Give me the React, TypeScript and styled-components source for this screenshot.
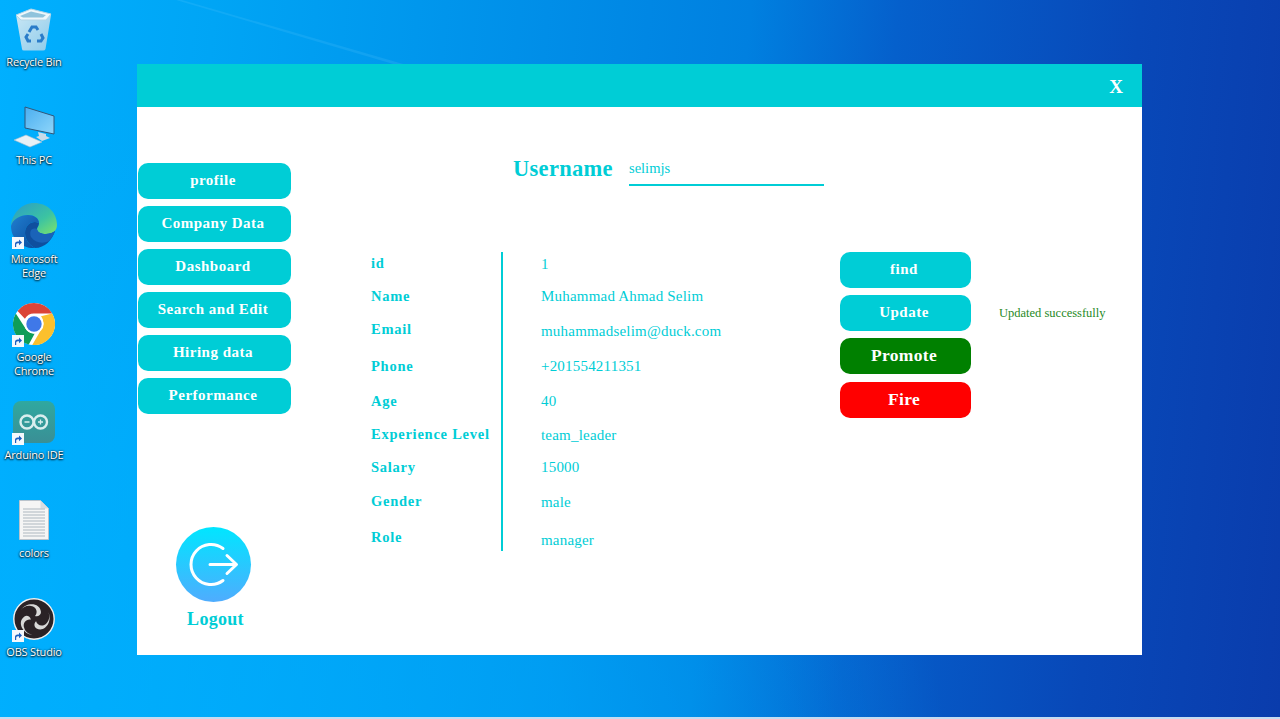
import styled, { createGlobalStyle } from "styled-components";

const GlobalStyle = createGlobalStyle`
  html, body {
    margin: 0;
    padding: 0;
    height: 100%;
    overflow: hidden;
  }
  * {
    box-sizing: border-box;
  }
`;

const CYAN = "#00cdd6";
const SERIF = `"Liberation Serif", "Times New Roman", serif`;

const Desktop = styled.div`
  position: relative;
  width: 1280px;
  height: 719px;
  overflow: hidden;
  background-image: radial-gradient(
      750px 700px at 200px 800px,
      rgba(0, 176, 255, 0.7) 0%,
      rgba(0, 176, 255, 0.5) 50%,
      rgba(0, 176, 255, 0) 100%
    ),
    linear-gradient(
      95deg,
      #00b0ff 0%,
      #00a5f5 16%,
      #0080e0 56%,
      #0560cc 67%,
      #0848b8 85%,
      #0a3cac 100%
    );
  border-bottom: 2px solid #c4dcf2;
  &::before {
    content: "";
    position: absolute;
    inset: 0;
    background: rgba(120, 210, 255, 0.14);
    clip-path: polygon(176px 0, 182px 0, 410px 66px, 400px 66px);
  }
`;

const IconColumn = styled.div`
  width: 68px;
  padding-top: 4px;
  display: flex;
  flex-direction: column;
`;

const Tile = styled.div`
  height: 98.3px;
  display: flex;
  flex-direction: column;
  align-items: center;
`;

const TileIcon = styled.div`
  position: relative;
  width: 50px;
  height: 50px;
  display: flex;
  align-items: center;
  justify-content: center;
`;

const Shortcut = styled.div`
  position: absolute;
  left: 3px;
  bottom: 2px;
  width: 12px;
  height: 12px;
  background: #f4f8fc;
  display: flex;
  align-items: center;
  justify-content: center;
`;

const TileLabel = styled.div`
  margin-top: 1px;
  font-family: "Open Sans", "Noto Sans", sans-serif;
  font-size: 11px;
  line-height: 14px;
  letter-spacing: -0.2px;
  color: #fff;
  text-align: center;
  white-space: pre-line;
  text-shadow: 0 1px 2px #000, 0 0 2px rgba(0, 0, 0, 0.8);
`;

const Window = styled.div`
  position: absolute;
  left: 137px;
  top: 64px;
  width: 1005px;
  height: 591px;
  background: #fff;
  display: flex;
  flex-direction: column;
`;

const TitleBar = styled.div`
  height: 43px;
  flex-shrink: 0;
  background: ${CYAN};
  display: flex;
  align-items: center;
  justify-content: flex-end;
  padding-right: 19px;
`;

const CloseMark = styled.span`
  font-family: ${SERIF};
  font-weight: 700;
  font-size: 19px;
  line-height: 1;
  color: #fff;
  margin-top: 1px;
`;

const Body = styled.div`
  flex: 1;
  display: flex;
`;

const Sidebar = styled.nav`
  width: 234px;
  flex-shrink: 0;
  padding: 56px 0 0 1px;
  display: flex;
  flex-direction: column;
`;

const NavList = styled.div`
  display: flex;
  flex-direction: column;
  gap: 7px;
`;

const PillButton = styled.button<{ $bg?: string; $big?: boolean }>`
  height: 36px;
  border: none;
  border-radius: 10px;
  padding: 0 3px 1px 0;
  background: ${(props) => props.$bg || CYAN};
  color: #fff;
  font-family: ${SERIF};
  font-weight: 700;
  font-size: ${(props) => (props.$big ? "17.5px" : "15px")};
  letter-spacing: ${(props) => (props.$big ? "0.3px" : "0.5px")};
`;

const NavButton = styled(PillButton)`
  width: 153px;
`;

const LogoutBox = styled.div`
  width: 151px;
  margin-top: 113px;
  display: flex;
  flex-direction: column;
  align-items: center;
`;

const LogoutCircle = styled.div`
  width: 75px;
  height: 75px;
  border-radius: 50%;
  background: linear-gradient(to bottom, #00e6ff, #4facfe);
  display: flex;
`;

const LogoutText = styled.div`
  margin-top: 5px;
  margin-left: 4px;
  font-family: ${SERIF};
  font-weight: 700;
  font-size: 18px;
  line-height: 24px;
  letter-spacing: 0.3px;
  color: ${CYAN};
`;

const Main = styled.main`
  flex: 1;
  padding-top: 46px;
`;

const UsernameRow = styled.div`
  margin-left: 142px;
  height: 33px;
  display: flex;
  align-items: flex-start;
`;

const UsernameLabel = styled.label`
  width: 116px;
  font-family: ${SERIF};
  font-weight: 700;
  font-size: 22.5px;
  line-height: 32px;
  letter-spacing: 0.3px;
  color: ${CYAN};
`;

const UsernameInput = styled.div`
  width: 195px;
  height: 33px;
  border-bottom: 2px solid ${CYAN};
  font-family: ${SERIF};
  font-size: 14.5px;
  line-height: 30px;
  color: ${CYAN};
`;

const Details = styled.div`
  margin-top: 66px;
  display: flex;
  align-items: flex-start;
`;

const LabelColumn = styled.div`
  width: 130px;
  display: flex;
  flex-direction: column;
`;

const FieldLabel = styled.div<{ $gap: number }>`
  margin-top: ${(props) => props.$gap}px;
  height: 20px;
  font-family: ${SERIF};
  font-weight: 700;
  font-size: 14.5px;
  line-height: 20px;
  letter-spacing: 0.75px;
  white-space: nowrap;
  color: ${CYAN};
`;

const ValueColumn = styled.div`
  width: 339px;
  height: 299px;
  padding-left: 38px;
  border-left: 2px solid ${CYAN};
  display: flex;
  flex-direction: column;
`;

const FieldValue = styled.div<{ $gap: number }>`
  margin-top: ${(props) => props.$gap}px;
  height: 20px;
  font-family: ${SERIF};
  font-size: 15px;
  line-height: 20px;
  letter-spacing: 0.2px;
  white-space: nowrap;
  color: ${CYAN};
`;

const Actions = styled.div`
  width: 131px;
  display: flex;
  flex-direction: column;
  gap: 7px;
  button:last-child {
    margin-top: 1px;
  }
`;

const StatusText = styled.div`
  margin: 53px 0 0 28px;
  font-family: ${SERIF};
  font-size: 12.5px;
  line-height: 16px;
  white-space: nowrap;
  color: #1f8a1f;
`;

const labels = [
  { text: "id", gap: 1 },
  { text: "Name", gap: 13 },
  { text: "Email", gap: 13 },
  { text: "Phone", gap: 17 },
  { text: "Age", gap: 15 },
  { text: "Experience Level", gap: 13 },
  { text: "Salary", gap: 13 },
  { text: "Gender", gap: 14 },
  { text: "Role", gap: 16 },
];

const values = [
  { text: "1", gap: 2 },
  { text: "Muhammad Ahmad Selim", gap: 12 },
  { text: "muhammadselim@duck.com", gap: 15 },
  { text: "+201554211351", gap: 15 },
  { text: "40", gap: 15 },
  { text: "team_leader", gap: 14 },
  { text: "15000", gap: 12 },
  { text: "male", gap: 15 },
  { text: "manager", gap: 18 },
];

const navItems = [
  "profile",
  "Company Data",
  "Dashboard",
  "Search and Edit",
  "Hiring data",
  "Performance",
];

function ShortcutBadge() {
  return (
    <Shortcut>
      <svg width="10" height="10" viewBox="0 0 10 10">
        <path d="M2 9V6c0-1.6 1-2.5 2.6-2.5H6V1.5L9 4.4 6 7.2V5.2H4.8C3.6 5.2 3.2 6 3.2 7v2z" fill="#1c5fc0" />
      </svg>
    </Shortcut>
  );
}

function RecycleBinIcon() {
  return (
    <svg width="42" height="44" viewBox="0 0 42 44">
      <defs>
        <linearGradient id="binBody" x1="0" y1="0" x2="1" y2="1">
          <stop offset="0" stopColor="#c8e6f5" />
          <stop offset="1" stopColor="#8ecbea" />
        </linearGradient>
      </defs>
      <path d="M3 8 L9 42 Q9 43.5 11 43.5 H30 Q32 43.5 32.5 42 L38 8z" fill="url(#binBody)" />
      <path d="M3 8 L18 2 L38 7 L33 13 L8 13z" fill="#eef7fb" stroke="#b4d5e6" strokeWidth="1" />
      <path d="M7 9 L18 4.5 L33 8 L30 10.5 L10 10.5z" fill="#8fc3dc" />
      <g fill="none" stroke="#2a7cc9" strokeWidth="3">
        <path d="M16 25l3-5h4l2 3" />
        <path d="M28 27l2 4-2 3h-4" />
        <path d="M18 34h-3l-2-4 2-3" />
      </g>
    </svg>
  );
}

function ThisPcIcon() {
  return (
    <svg width="44" height="42" viewBox="0 0 44 42">
      <defs>
        <linearGradient id="pcScreen" x1="0" y1="0" x2="1" y2="1">
          <stop offset="0" stopColor="#4aaef0" />
          <stop offset="1" stopColor="#8fd6fa" />
        </linearGradient>
      </defs>
      <path d="M13 1 L42 10 V28 L13 22z" fill="url(#pcScreen)" stroke="#31577a" strokeWidth="1" />
      <path d="M26 26 L34 28 V30 L38 32 L30 35 L24 31 L27 30z" fill="#c8dbe8" />
      <path d="M2 34 L14 29 L30 36 L18 41z" fill="#e8f0f6" stroke="#a3bccd" strokeWidth="0.6" />
    </svg>
  );
}

function EdgeIcon() {
  return (
    <svg width="46" height="46" viewBox="0 0 46 46">
      <defs>
        <linearGradient id="edgeTop" x1="0" y1="0" x2="1" y2="1">
          <stop offset="0" stopColor="#2a9bc8" />
          <stop offset="0.6" stopColor="#3cc3a2" />
          <stop offset="1" stopColor="#7de36a" />
        </linearGradient>
        <linearGradient id="edgeLow" x1="0" y1="0" x2="1" y2="1">
          <stop offset="0" stopColor="#1f7fd0" />
          <stop offset="1" stopColor="#0c4a9c" />
        </linearGradient>
      </defs>
      <path d="M23 0C36 0 46 9 46 22c0 6-5 9-11 9-5 0-9-2-9-5 0-2 2-3 2-6 0-5-5-8-11-8C9 12 2 17 0 23 1 10 11 0 23 0z" fill="url(#edgeTop)" />
      <path d="M0 23c2-7 9-11 17-11 6 0 11 3 11 8-7-3-14 2-14 10 0 6 4 12 10 15C11 46 0 36 0 23z" fill="url(#edgeLow)" />
      <path d="M28 20c0 3-2 4-2 6 0 3 4 5 9 5 3 0 7-1 9-3-3 9-10 17-20 17-6-3-10-9-10-15 0-8 7-13 14-10z" fill="#0f4f9e" />
      <path d="M26 26c0 3 4 5 9 5 3 0 7-1 9-3-1 3-3 7-6 10-6 3-14 2-18-4-2-5 0-10 6-8z" fill="#1a63b8" />
    </svg>
  );
}

function ChromeIcon() {
  return (
    <svg width="42" height="42" viewBox="0 0 48 48">
      <circle cx="24" cy="24" r="24" fill="#fff" />
      <path d="M24 0a24 24 0 0 1 20.8 12H24a12 12 0 0 0-10.4 6L5.2 9A24 24 0 0 1 24 0z" fill="#db4437" />
      <path d="M3.2 12A24 24 0 0 0 18 47.3l7-12.6a12 12 0 0 1-11.4-6.7z" fill="#0f9d58" />
      <path d="M44.8 12A24 24 0 0 1 22 48l10.4-18A12 12 0 0 0 32 15z" fill="#fbc02d" />
      <circle cx="24" cy="24" r="11" fill="#fff" />
      <circle cx="24" cy="24" r="8.8" fill="#3f78e8" />
    </svg>
  );
}

function ArduinoIcon() {
  return (
    <svg width="42" height="42" viewBox="0 0 42 42">
      <defs>
        <linearGradient id="arduinoBg" x1="0" y1="0" x2="0" y2="1">
          <stop offset="0" stopColor="#2fa8a0" />
          <stop offset="1" stopColor="#3a8f95" />
        </linearGradient>
      </defs>
      <rect width="42" height="42" rx="8" fill="url(#arduinoBg)" />
      <g fill="none" stroke="#d8eeee" strokeWidth="2.4">
        <circle cx="14" cy="21" r="6.5" />
        <circle cx="27.5" cy="21" r="6.5" />
      </g>
      <path d="M11.5 21h5M25 21h5M27.5 18.5v5" stroke="#d8eeee" strokeWidth="1.3" />
    </svg>
  );
}

function FileIcon() {
  return (
    <svg width="30" height="40" viewBox="0 0 30 40">
      <path d="M.5.5h21l8 8v31H.5z" fill="#f5f5f5" stroke="#b9c3cc" />
      <path d="M21.5.5v8h8z" fill="#d7dde2" />
      <g stroke="#adb7bf" strokeWidth="1">
        {[9, 12, 15, 18, 21, 24, 27, 30, 33, 36].map((y) => (
          <line key={y} x1="4" x2="26" y1={y} y2={y} />
        ))}
      </g>
    </svg>
  );
}

function ObsIcon() {
  const blade = "M8 12C13 4 27 4 28 14c0 3-3 5-6 4 3-3 2-9-4-10-4-1-8 1-10 4z";
  return (
    <svg width="42" height="42" viewBox="0 0 42 42">
      <circle cx="21" cy="21" r="20.2" fill="#2a2226" stroke="#f0f0f0" strokeWidth="1.4" />
      <g fill="#d8d8d8">
        <path d={blade} />
        <path d={blade} transform="rotate(120 21 21)" />
        <path d={blade} transform="rotate(240 21 21)" />
      </g>
    </svg>
  );
}

const desktopIcons = [
  { label: "Recycle Bin", icon: <RecycleBinIcon />, link: false },
  { label: "This PC", icon: <ThisPcIcon />, link: false },
  { label: "Microsoft\nEdge", icon: <EdgeIcon />, link: true },
  { label: "Google\nChrome", icon: <ChromeIcon />, link: true },
  { label: "Arduino IDE", icon: <ArduinoIcon />, link: true },
  { label: "colors", icon: <FileIcon />, link: false },
  { label: "OBS Studio", icon: <ObsIcon />, link: true },
];

function App() {
  return (
    <Desktop>
      <GlobalStyle />
      <IconColumn>
        {desktopIcons.map((item) => (
          <Tile key={item.label}>
            <TileIcon>
              {item.icon}
              {item.link && <ShortcutBadge />}
            </TileIcon>
            <TileLabel>{item.label}</TileLabel>
          </Tile>
        ))}
      </IconColumn>
      <Window>
        <TitleBar>
          <CloseMark>X</CloseMark>
        </TitleBar>
        <Body>
          <Sidebar>
            <NavList>
              {navItems.map((item) => (
                <NavButton key={item}>{item}</NavButton>
              ))}
            </NavList>
            <LogoutBox>
              <LogoutCircle>
                <svg width="75" height="75" viewBox="0 0 75 75" fill="none" stroke="#fff" strokeWidth="3">
                  <path d="M47 21.5a20 20 0 1 0 0 32" strokeLinecap="round" />
                  <path d="M34 37.5h26M51 28.5l9.5 9-9.5 9" strokeLinecap="round" strokeLinejoin="round" />
                </svg>
              </LogoutCircle>
              <LogoutText>Logout</LogoutText>
            </LogoutBox>
          </Sidebar>
          <Main>
            <UsernameRow>
              <UsernameLabel>Username</UsernameLabel>
              <UsernameInput>selimjs</UsernameInput>
            </UsernameRow>
            <Details>
              <LabelColumn>
                {labels.map((row) => (
                  <FieldLabel key={row.text} $gap={row.gap}>
                    {row.text}
                  </FieldLabel>
                ))}
              </LabelColumn>
              <ValueColumn>
                {values.map((row) => (
                  <FieldValue key={row.text} $gap={row.gap}>
                    {row.text}
                  </FieldValue>
                ))}
              </ValueColumn>
              <Actions>
                <PillButton>find</PillButton>
                <PillButton>Update</PillButton>
                <PillButton $bg="#008000" $big>
                  Promote
                </PillButton>
                <PillButton $bg="#ff0000" $big>
                  Fire
                </PillButton>
              </Actions>
              <StatusText>Updated successfully</StatusText>
            </Details>
          </Main>
        </Body>
      </Window>
    </Desktop>
  );
}

export default App;
